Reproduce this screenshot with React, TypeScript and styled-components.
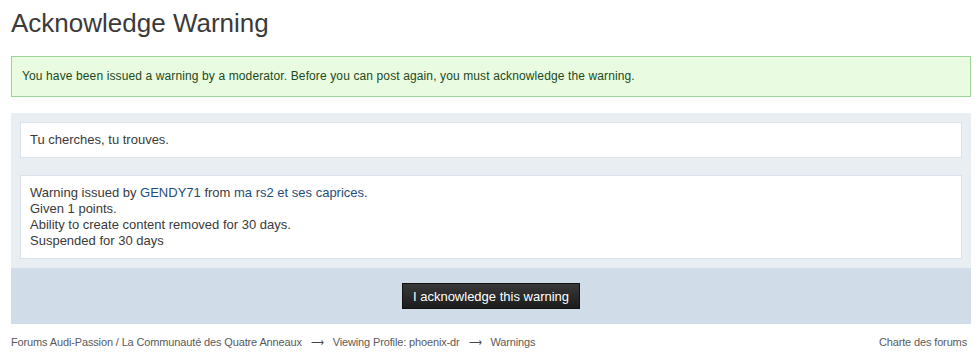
import React from 'react';
import styled, { createGlobalStyle } from 'styled-components';

const GlobalStyle = createGlobalStyle`
  body {
    margin: 0;
    background: #ffffff;
    font-family: "Liberation Sans", Arial, Helvetica, sans-serif;
    color: #333333;
  }
`;

const Page = styled.div`
  padding: 0 9px 0 11px;
`;

const Title = styled.h1`
  margin: 0;
  padding: 9px 0 0 0;
  font-size: 26px;
  font-weight: normal;
  line-height: 28px;
  color: #3a3a3a;
`;

const Message = styled.div`
  margin-top: 19px;
  padding: 12px 10px 13px 10px;
  background: #e9fbe0;
  border: 1px solid #9cd49a;
  color: #1c4a1c;
  font-size: 12px;
  line-height: 14px;
  letter-spacing: 0.12px;
`;

const Panel = styled.div`
  margin-top: 16px;
  background: #e9eef2;
`;

const PanelBody = styled.div`
  display: flex;
  flex-direction: column;
  gap: 17px;
  padding: 9px;
`;

const Box = styled.div`
  background: #ffffff;
  border: 1px solid #d9e2ec;
  padding: 9px;
  font-size: 13px;
  line-height: 16px;
  color: #3a3a3a;
`;

const Link = styled.a`
  color: #1f4e7a;
  text-decoration: none;
`;

const SubmitBar = styled.div`
  display: flex;
  justify-content: center;
  padding: 15px 0;
  background: #d1dce9;
`;

const Button = styled.button`
  height: 26px;
  padding: 0 10px;
  border: 1px solid #111111;
  background: linear-gradient(#383838, #1c1c1c);
  color: #ffffff;
  font-family: "Liberation Sans", Arial, Helvetica, sans-serif;
  font-size: 13px;
  cursor: pointer;
`;

const Footer = styled.div`
  display: flex;
  justify-content: space-between;
  align-items: center;
  padding: 12px 4px 0 0;
  font-size: 11px;
  letter-spacing: -0.14px;
  color: #5a5a5a;
`;

const Crumbs = styled.div`
  display: flex;
  align-items: center;
  gap: 8px;
`;

const Arrow = styled.span`
  color: #444444;
  font-size: 9px;
  padding: 0 1px;
`;

export default function App() {
  return (
    <>
      <GlobalStyle />
      <Page>
        <Title>Acknowledge Warning</Title>
        <Message>
          You have been issued a warning by a moderator. Before you can post again, you must acknowledge the warning.
        </Message>
        <Panel>
          <PanelBody>
            <Box>Tu cherches, tu trouves.</Box>
            <Box>
              Warning issued by <Link href="#">GENDY71</Link> from <Link href="#">ma rs2 et ses caprices</Link>.
              <br />
              Given 1 points.
              <br />
              Ability to create content removed for 30 days.
              <br />
              Suspended for 30 days
            </Box>
          </PanelBody>
          <SubmitBar>
            <Button>I acknowledge this warning</Button>
          </SubmitBar>
        </Panel>
        <Footer>
          <Crumbs>
            <span>Forums Audi-Passion / La Communauté des Quatre Anneaux</span>
            <Arrow>⟶</Arrow>
            <span>Viewing Profile: phoenix-dr</span>
            <Arrow>⟶</Arrow>
            <span>Warnings</span>
          </Crumbs>
          <span>Charte des forums</span>
        </Footer>
      </Page>
    </>
  );
}
